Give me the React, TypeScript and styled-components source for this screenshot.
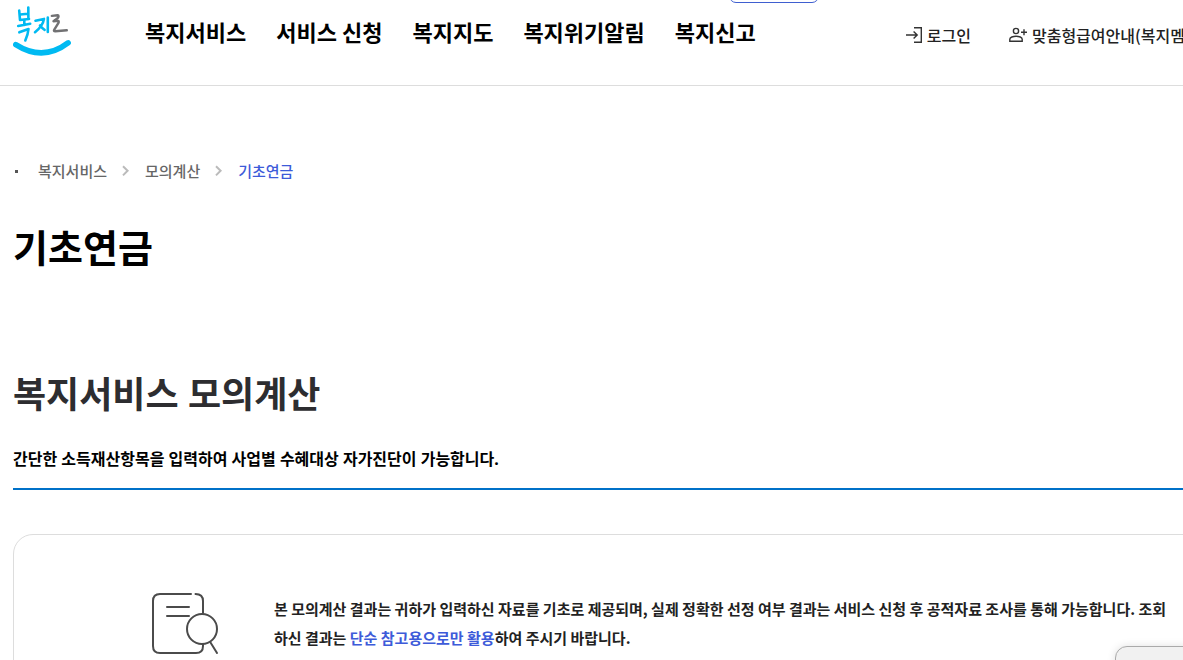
import React from "react";
import styled, { createGlobalStyle } from "styled-components";

const Global = createGlobalStyle`
  *, *::before, *::after { box-sizing: border-box; }
  body {
    margin: 0;
    background: #fff;
    color: #000;
    font-family: "Noto Sans CJK KR", "Noto Sans", sans-serif;
  }
  h1, h2, p, ul, ol { margin: 0; padding: 0; }
  ul, ol { list-style: none; }
  a { color: inherit; text-decoration: none; }
`;

const Page = styled.div`
  position: relative;
  height: 100vh;
  overflow: hidden;
`;

const Header = styled.header`
  display: flex;
  align-items: flex-start;
  height: 86px;
  padding-left: 13px;
  border-bottom: 1px solid #ddd;
  white-space: nowrap;
`;

const LogoLink = styled.a`
  flex: none;
  width: 132px;
  padding-top: 5px;

  svg { display: block; }
`;

const Menu = styled.ul`
  display: flex;
  flex: none;
  gap: 30px;
  padding-top: 15px;
  font-size: 22px;
  font-weight: 700;
  line-height: 32px;
`;

const Utilities = styled.ul`
  display: flex;
  flex: none;
  gap: 37px;
  margin-left: auto;
  margin-right: -37px;
  padding-top: 23px;
`;

const UtilityLink = styled.a`
  display: flex;
  align-items: center;
  gap: 4px;
  color: #222;
  font-size: 16px;
  font-weight: 500;
  line-height: 24px;
`;

const TopTab = styled.button`
  position: absolute;
  top: -24px;
  left: 729px;
  width: 90px;
  height: 27px;
  border: 1px solid #3f5fd0;
  border-radius: 7px;
  background: #fff;
`;

const Main = styled.main`
  padding: 73px 0 0 13px;
`;

const Breadcrumb = styled.ol`
  display: flex;
  align-items: center;
  color: #666;
  font-size: 15px;
  font-weight: 500;
  line-height: 24px;

  &::before {
    content: "";
    width: 3px;
    height: 3px;
    margin: 0 20px 0 2px;
    background: #555;
  }
`;

const Crumb = styled.li<{ $current?: boolean }>`
  display: flex;
  align-items: center;
  color: ${(p) => (p.$current ? "#3d5bd9" : "inherit")};

  svg { margin: 0 15px 0 14px; }
`;

const PageTitle = styled.h1`
  margin-top: 35px;
  font-size: 38px;
  font-weight: 700;
  line-height: 56px;
`;

const SectionTitle = styled.h2`
  margin-top: 94px;
  color: #2d2d30;
  font-family: "Noto Sans", "Noto Sans CJK KR", sans-serif;
  font-size: 36px;
  font-weight: 700;
  line-height: 54px;
`;

const Lead = styled.p`
  margin-top: 25px;
  padding-bottom: 17px;
  border-bottom: 2px solid #0071c8;
  font-family: "Noto Sans", "Noto Sans CJK KR", sans-serif;
  font-size: 16px;
  font-weight: 700;
  line-height: 24px;
`;

const Notice = styled.section`
  display: flex;
  align-items: flex-start;
  gap: 53px;
  margin-top: 44px;
  margin-right: -44px;
  padding: 57px 40px 60px 137px;
  border: 1px solid #ddd;
  border-radius: 20px;

  svg { flex: none; }
`;

const NoticeText = styled.p`
  max-width: 902px;
  padding-top: 2px;
  color: #222;
  font-size: 15px;
  font-weight: 700;
  line-height: 29px;

  em {
    color: #3d5bd9;
    font-style: normal;
  }
`;

const FloatingPanel = styled.aside`
  position: absolute;
  right: -12px;
  bottom: -26px;
  width: 80px;
  height: 40px;
  border: 1px solid #aaa;
  border-radius: 12px;
  background: #f1f1f1;
  box-shadow: 0 0 8px rgba(0, 0, 0, 0.12);
`;

const Logo = () => (
  <svg width="60" height="52" viewBox="0 0 60 52" fill="none" strokeLinecap="round" strokeLinejoin="round" role="img" aria-label="복지로">
    <g stroke="#00baf2" strokeWidth="2.6">
      <path d="M6.200 5.500 7 15 16 14M15.300 2.500 15.400 14M7.300 9.500l7.500-.7" />
      <path d="M11.300 15v5M5.200 21 17.200 18.800M6.300 27.300 15.500 24q-.4 5-3.200 11.500" />
      <path d="M22.500 15.700 31 13.900q-1.200 7.300-9 13.300M27 20.500q2.500 3.200 4.600 4.300M34.800 12.500v14.500" />
    </g>
    <path stroke="#717173" strokeWidth="2.400" d="M38.800 10.900l5.800-.6q1.700.2.300 2.600l-4.400 3.400 4.800-.4q1.200.6-.6 3.200L41.300 24.600q-1.100 1.700 1 1.700l11.500-1" />
    <path stroke="#00baf2" strokeWidth="5.500" d="M2.800 39.600Q30 57 55.200 37.800" />
  </svg>
);

const LoginIcon = () => (
  <svg width="18" height="18" viewBox="0 0 18 18" fill="none" stroke="#333" strokeWidth="1.4" aria-hidden="true">
    <path d="M9 1.700h7.300v14.600H9M1 9h11M8.600 5.400 12.200 9l-3.600 3.600" />
  </svg>
);

const MemberIcon = () => (
  <svg width="20" height="18" viewBox="0 0 20 18" fill="none" stroke="#333" strokeWidth="1.4" aria-hidden="true">
    <circle cx="8" cy="5" r="2.6" />
    <path d="M1.800 15.200v-2q0-1.500 2-2.200 4.200-1.500 8.500 0 1.900.7 1.900 2.200v2zM16 3.300v6M13 6.300h6" />
  </svg>
);

const Chevron = () => (
  <svg width="9" height="12" viewBox="0 0 9 12" fill="none" stroke="#bbb" strokeWidth="2" aria-hidden="true">
    <path d="m2 1.200 4.600 4.600L2 10.400" />
  </svg>
);

const DocumentIcon = () => (
  <svg width="70" height="64" viewBox="0 0 70 64" fill="none" stroke="#4b4b4b" strokeWidth="2" strokeLinecap="round" aria-hidden="true">
    <path d="M40 2H9Q2 2 2 9v45q0 7 7 7h36q7 0 7-7v-2M44.500 2Q52 2 52 9v12M16 15h22M16 24h22" />
    <circle cx="51" cy="37" r="15" />
    <path d="m59.500 50.500 6.500 10.500" />
  </svg>
);

const menu = ["복지서비스", "서비스 신청", "복지지도", "복지위기알림", "복지신고"];

export default function App() {
  return (
    <Page>
      <Global />
      <Header>
        <LogoLink href="#home"><Logo /></LogoLink>
        <nav aria-label="주 메뉴">
          <Menu>
            {menu.map((label) => (
              <li key={label}><a href="#menu">{label}</a></li>
            ))}
          </Menu>
        </nav>
        <Utilities>
          <li><UtilityLink href="#login"><LoginIcon />로그인</UtilityLink></li>
          <li><UtilityLink href="#membership"><MemberIcon />맞춤형급여안내(복지멤버십)</UtilityLink></li>
        </Utilities>
      </Header>
      <TopTab type="button" />
      <Main>
        <nav aria-label="현재 위치">
          <Breadcrumb>
            <Crumb><a href="#service">복지서비스</a><Chevron /></Crumb>
            <Crumb><a href="#calc">모의계산</a><Chevron /></Crumb>
            <Crumb $current><a href="#pension" aria-current="page">기초연금</a></Crumb>
          </Breadcrumb>
        </nav>
        <PageTitle>기초연금</PageTitle>
        <SectionTitle>복지서비스 모의계산</SectionTitle>
        <Lead>간단한 소득재산항목을 입력하여 사업별 수혜대상 자가진단이 가능합니다.</Lead>
        <Notice>
          <DocumentIcon />
          <NoticeText>
            본 모의계산 결과는 귀하가 입력하신 자료를 기초로 제공되며, 실제 정확한 선정 여부 결과는 서비스 신청 후 공적자료 조사를 통해 가능합니다. 조회하신 결과는 <em>단순 참고용으로만 활용</em>하여 주시기 바랍니다.
          </NoticeText>
        </Notice>
      </Main>
      <FloatingPanel />
    </Page>
  );
}
